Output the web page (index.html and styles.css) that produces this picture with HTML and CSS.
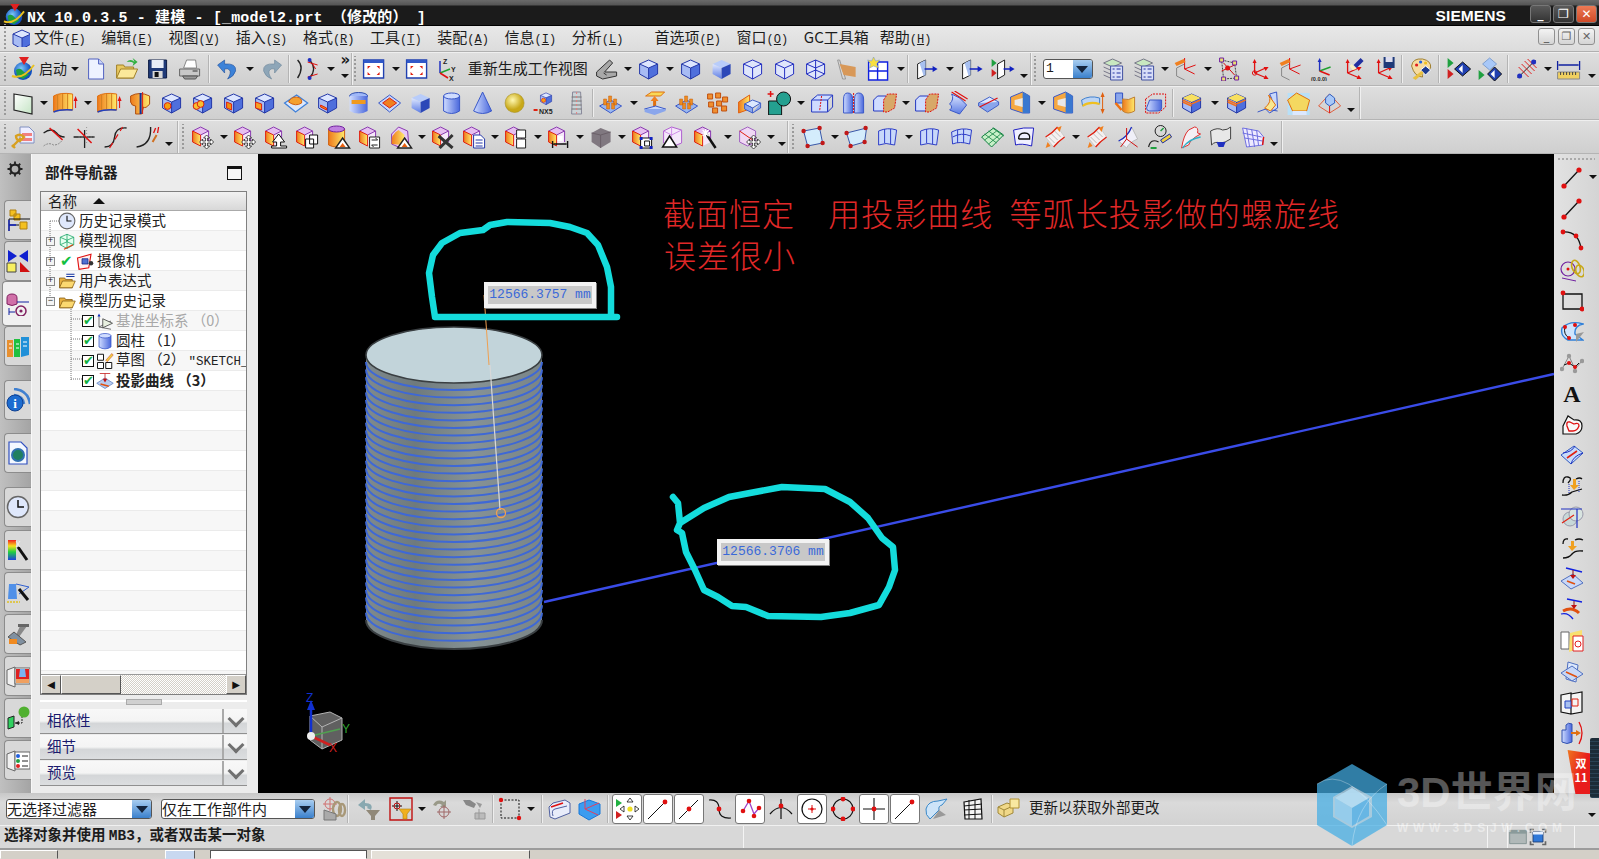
FILE: index.html
```html
<!DOCTYPE html>
<html lang="zh-CN">
<head>
<meta charset="utf-8">
<title>NX 10</title>
<link rel="stylesheet" href="styles.css">
</head>
<body>
<svg class="defs" width="0" height="0" aria-hidden="true">
<defs>
<linearGradient id="gO" x1="0" y1="0" x2="1" y2="0"><stop offset="0" stop-color="#ee7a1c"/><stop offset="1" stop-color="#ffe96a"/></linearGradient>
<linearGradient id="gB" x1="0" y1="0" x2="1" y2="0"><stop offset="0" stop-color="#cfdcff"/><stop offset="1" stop-color="#4a68dc"/></linearGradient>
<linearGradient id="gV" x1="0" y1="0" x2="0" y2="1"><stop offset="0" stop-color="#dfe8ff"/><stop offset="1" stop-color="#5c7ce4"/></linearGradient>
<linearGradient id="gP" x1="0" y1="0" x2="1" y2="1"><stop offset="0" stop-color="#fff"/><stop offset="1" stop-color="#c4e4c4"/></linearGradient>
<linearGradient id="gCyl" x1="0" y1="0" x2="1" y2="0"><stop offset="0" stop-color="#7f8a8d"/><stop offset=".28" stop-color="#6f7a7c"/><stop offset=".6" stop-color="#869295"/><stop offset="1" stop-color="#7a8587"/></linearGradient>
<linearGradient id="gRain" x1="0" y1="0" x2="0" y2="1"><stop offset="0" stop-color="#f02020"/><stop offset=".3" stop-color="#f8e020"/><stop offset=".6" stop-color="#20d040"/><stop offset="1" stop-color="#2040e0"/></linearGradient>
<radialGradient id="gSph" cx=".4" cy=".35"><stop offset="0" stop-color="#fff8b0"/><stop offset="1" stop-color="#c8a818"/></radialGradient>
<radialGradient id="gGlobe" cx=".4" cy=".35"><stop offset="0" stop-color="#7ec8f8"/><stop offset="1" stop-color="#1050c0"/></radialGradient>
<g id="cb"><path d="M3 7 12 3 21 7 12 11Z" fill="#dde6ff"/><path d="M3 7 12 11V22L3 17Z" fill="#a8bcf4"/><path d="M21 7 12 11V22L21 17Z" fill="#4f6fdc"/><path d="M3 7 12 3 21 7V17L12 22 3 17ZM12 11 3 7M12 11 21 7M12 11V22" fill="none" stroke="#2438a8"/></g>
<g id="cw"><path d="M3 7 12 3 21 7V17L12 22 3 17Z" fill="#dfe6fb"/><path d="M3 7 12 3 21 7V17L12 22 3 17ZM12 11 3 7M12 11 21 7M12 11V22" fill="none" stroke="#2430c0"/></g>
<g id="pc"><path d="M2 6 10 2 18 6 10 10Z" fill="#e6bff0"/><path d="M2 6 10 10V21L2 17Z" fill="url(#gO)"/><path d="M18 6 10 10V21L18 17Z" fill="#f6e8fa"/><path d="M2 6 10 2 18 6V17M18 6 10 10" fill="none" stroke="#8a3ab0"/><path d="M2 6 10 10V21L2 17Z" fill="none" stroke="#e02010"/></g>
<g id="mv"><path d="M16 10l3 3h-2v3h3v-2l3 3-3 3v-2h-3v3h2l-3 3-3-3h2v-3h-3v2l-3-3 3-3v2h3v-3h-2z" fill="#fff" stroke="#222" stroke-width=".8"/></g>
<g id="tri"><path d="M16 13 23 23H9Z" fill="#fff" stroke="#222" stroke-width="1.4"/><path d="M16 18 19 22H13Z" fill="#e86010"/></g>
<g id="sh"><path d="M3 6Q12 2 21 5L19 20Q10 17 3 20Z" fill="#c8d8fa" stroke="#3040c8"/><path d="M9 4V18M15 4V19" stroke="#3040c8" fill="none"/></g>
<g id="xyz"><path d="M7 16V4" stroke="#e01010" stroke-width="1.3"/><path d="M7 16 18 11" stroke="#e01010" stroke-width="1.3"/><path d="M7 16 19 21" stroke="#e01010" stroke-width="1.3"/><path d="M7 2 5 6H9ZM21 10 16 10 18 14ZM21 22 16 22 18 18Z" fill="#e01010"/></g>
</defs>
<symbol id="nx" viewBox="0 0 24 24"><circle cx="12" cy="14" r="9" fill="url(#gGlobe)"/><path d="M5 13Q9 10 12 14T19 17L12 22 6 19Z" fill="#20a040"/><path d="M1 19Q12 23 23 8" fill="none" stroke="#e8c020" stroke-width="2"/><path d="M8 0H18L13 8Z" fill="#e02020"/></symbol>
<symbol id="doc" viewBox="0 0 24 24"><path d="M5 2H15L20 7V22H5Z" fill="#eef2ff" stroke="#5060c0"/><path d="M15 2V7H20" fill="#c8d4fa" stroke="#5060c0"/></symbol>
<symbol id="fold" viewBox="0 0 24 24"><path d="M2 21 2 8 9 8 10 10H19V21Z" fill="#e8c860" stroke="#a08028"/><path d="M2 21 6 12H23L19 21Z" fill="#fbe89a" stroke="#a08028"/><path d="M12 5Q16 1 20 5L18 1 23 5 18 9 19 6Q16 4 12 5Z" fill="#30b040"/></symbol>
<symbol id="fld2" viewBox="0 0 24 24"><path d="M2 21 2 8 9 8 10 10H19V21Z" fill="#e8b040" stroke="#805810"/><path d="M2 21 6 12H23L19 21Z" fill="#fbd870" stroke="#805810"/></symbol>
<symbol id="fldq" viewBox="0 0 24 24"><path d="M2 21 2 8 9 8 10 10H19V21Z" fill="#e8b040" stroke="#805810"/><path d="M2 21 6 12H23L19 21Z" fill="#fbd870" stroke="#805810"/><path d="M11 3H22M11 6H22" stroke="#1030a0" stroke-width="1.4"/></symbol>
<symbol id="tw" viewBox="0 0 24 24"><path d="M3 7 12 3 21 7V17L12 22 3 17ZM12 11 3 7M12 11 21 7M12 11V22M3 17 12 13 21 17M12 3V13" fill="#e8fff0" stroke="#10a060"/><path d="M8 23 20 17" stroke="#e04010" stroke-width="1.6"/></symbol>
<symbol id="tc" viewBox="0 0 24 24"><path d="M2 8 20 3 17 21 4 23Z" fill="#fff0f0" stroke="#e01010" stroke-width="1.5"/><path d="M8 9H16V16H8Z" fill="#5070d0" stroke="#102080"/><circle cx="20" cy="15" r="3" fill="#333"/></symbol>
<symbol id="ts" viewBox="0 0 24 24"><path d="M2 3H10V11H2ZM2 14H10V22H2ZM13 14H21V22H13Z" fill="#fff" stroke="#111" stroke-width="1.3"/><path d="M13 11 21 2 23 4 15 13Z" fill="#f0d040" stroke="#c02020" stroke-width=".6"/></symbol>
<symbol id="tx" viewBox="0 0 24 24"><path d="M4 20V4M4 20 20 12M4 20 20 23" stroke="#444" fill="none"/><path d="M9 9 22 15 9 21Z" fill="#e8f0e0" stroke="#333"/><path d="M4 2 2 6H6Z" fill="#1030c0"/></symbol>
<symbol id="tp" viewBox="0 0 24 24"><path d="M1 15 12 8 23 15 12 22Z" fill="#b8ccf0" stroke="#6080c0"/><path d="M6 16 17 19" stroke="#e05010" stroke-width="2"/><path d="M5 2H19M12 2V12" stroke="#c01010"/><path d="M12 14 9 9H15Z" fill="#c01010"/></symbol>
<symbol id="save" viewBox="0 0 24 24"><path d="M3 3H21V21H3Z" fill="#1f3a78" stroke="#0d1c44"/><path d="M6 3H18V11H6Z" fill="#e8eef8"/><path d="M7 14H17V21H7Z" fill="#d8d8d8"/><path d="M9 15H13V20H9Z" fill="#111"/></symbol>
<symbol id="print" viewBox="0 0 24 24"><path d="M6 11 9 3H18L19 11Z" fill="#fff" stroke="#888"/><path d="M2 12H22V19H2Z" fill="#c8c8c8" stroke="#666"/><path d="M5 19H20L18 22H7Z" fill="#999" stroke="#555"/><path d="M15 14H20" stroke="#333"/></symbol>
<symbol id="undo" viewBox="0 0 24 24"><path d="M2 8 9 3V7Q21 6 20 14 18 20 12 22 16 16 14 13 12 11 9 12V16Z" fill="#3c82d8" stroke="#1c4c98" stroke-width=".6"/></symbol>
<symbol id="redo" viewBox="0 0 24 24"><path d="M22 8 15 3V7Q3 6 4 14 6 20 12 22 8 16 10 13 12 11 15 12V16Z" fill="#8ea6b8" stroke="#6c8498" stroke-width=".6"/></symbol>
<symbol id="arcx" viewBox="0 0 24 24"><path d="M2 3Q9 10 2 21" fill="none" stroke="#222" stroke-width="1.4"/><path d="M14 3Q22 12 14 21" fill="none" stroke="#222" stroke-width="1.2"/><path d="M12 5 22 8M22 17 12 20M17 7 20 12" stroke="#e01010"/><circle cx="14" cy="3" r="2" fill="#2030c0"/><circle cx="14" cy="21" r="2" fill="#2030c0"/></symbol>
<symbol id="fit" viewBox="0 0 24 24"><path d="M2 3H22V21H2Z" fill="#fff" stroke="#2040b0" stroke-width="1.4"/><path d="M2 3H22V6H2Z" fill="#3058c8"/><path d="M6 9H9L6 12ZM18 9H15L18 12ZM6 18H9L6 15ZM18 18H15L18 15Z" fill="#e02010"/></symbol>
<symbol id="wcs" viewBox="0 0 24 24"><path d="M7 16V4" stroke="#2030c0" stroke-width="1.5"/><path d="M7 16 17 12" stroke="#20a030" stroke-width="1.5"/><path d="M7 16 15 21" stroke="#e01010" stroke-width="1.5"/></symbol>
<symbol id="prism" viewBox="0 0 24 24"><path d="M2 15 15 3 18 6 10 15 22 15V19L8 22 2 19Z" fill="#a8a8a8" stroke="#333"/><path d="M9 16 12 18" stroke="#333"/></symbol>
<symbol id="cbU" viewBox="0 0 24 24"><use href="#cb"/></symbol>
<symbol id="cg" viewBox="0 0 24 24"><path d="M3 7 12 3 21 7 12 11Z" fill="#b8ccfa"/><path d="M3 7 12 11V22L3 17Z" fill="url(#gV)"/><path d="M21 7 12 11V22L21 17Z" fill="#2c48b8"/></symbol>
<symbol id="cw1" viewBox="0 0 24 24"><use href="#cw"/></symbol>
<symbol id="cw2" viewBox="0 0 24 24"><use href="#cw"/><path d="M3 17 12 13 21 17M12 3V13" stroke="#2430c0" fill="none"/></symbol>
<symbol id="paper" viewBox="0 0 24 24"><path d="M3 3 8 22H11L5 3Z" fill="#d8d8d8" stroke="#999"/><path d="M5 7 21 10V20L9 18Z" fill="#d89858"/></symbol>
<symbol id="grid" viewBox="0 0 24 24"><path d="M3 5H22V23H3ZM3 14H22M12 5V23" fill="#fff" stroke="#1020e0" stroke-width="1.4"/><path d="M8 0 10 4 14 3 11 7 13 11 8 9 4 11 5 7 2 3 6 4Z" fill="#f8e040" stroke="#7090c0" stroke-width=".5"/></symbol>
<symbol id="pla" viewBox="0 0 24 24"><path d="M3 7 11 3V18L3 22Z" fill="#fff" stroke="#222"/><path d="M5 6 11 3V18L9 19Z" fill="#a8c0f0"/><path d="M10 12H19" stroke="#1020c0" stroke-width="1.4"/><path d="M23 12 18 9V15Z" fill="#1020c0"/></symbol>
<symbol id="plb" viewBox="0 0 24 24"><path d="M1 2 6 6 1 10Z" fill="#20a040"/><path d="M1 12 6 16 1 20Z" fill="#d02020"/><path d="M7 7 14 3V18L7 22Z" fill="#fff" stroke="#222"/><path d="M13 12H20" stroke="#1020c0" stroke-width="1.4"/><path d="M24 12 19 9V15Z" fill="#1020c0"/></symbol>
<symbol id="stack" viewBox="0 0 24 24"><path d="M3 6 12 2 21 6 12 10Z" fill="#c8e8c0" stroke="#778"/><path d="M3 10 12 14 21 10M3 14 12 18 21 14M3 18 12 22" fill="none" stroke="#778"/><path d="M10 9H22V23H10Z" fill="#d8def8" stroke="#4050a0"/><path d="M12 12H14M16 12H20M12 16H14M16 16H20M12 20H14M16 20H20" stroke="#2030a0"/></symbol>
<symbol id="csO" viewBox="0 0 24 24"><path d="M3 19V11L11 7M3 19 11 23" stroke="#888" fill="none"/><path d="M11 14V3M11 14 22 10M11 14 21 19" stroke="#e01010" fill="none" transform="translate(0 -2)"/><path d="M1 6 10 2 12 5 3 9Z" fill="#f08020"/></symbol>
<symbol id="node" viewBox="0 0 24 24"><path d="M5 3 18 6 20 21 7 22Z" fill="none" stroke="#444" stroke-dasharray="2 1"/><path d="M7 6 18 18M5 14 18 8" stroke="#d01010"/><path d="M3 1H7V5H3ZM16 4H20V8H16ZM18 19H22V23H18ZM5 20H9V24H5Z" fill="#e8e070" stroke="#7020a0"/><circle cx="11" cy="11" r="2.5" fill="#e01010"/></symbol>
<symbol id="ax0" viewBox="0 0 24 24"><use href="#xyz"/><circle cx="7" cy="16" r="2.2" fill="none" stroke="#e01010"/></symbol>
<symbol id="ax" viewBox="0 0 24 24"><path d="M10 14V3" stroke="#2030c0" stroke-width="1.4"/><path d="M10 1 8 5H12Z" fill="#2030c0"/><path d="M10 14 21 10" stroke="#20a030" stroke-width="1.4"/><path d="M10 14 20 18" stroke="#e01010" stroke-width="1.4"/></symbol>
<symbol id="axL" viewBox="0 0 24 24"><use href="#xyz"/><path d="M13 8 20 1 23 4 16 11Z" fill="#2030a0"/><path d="M11 7 16 12 12 13 9 9Z" fill="#f8f0c0"/></symbol>
<symbol id="axS" viewBox="0 0 24 24"><use href="#xyz"/><path d="M12 0H23V11H12Z" fill="#1f3a78"/><path d="M14 0H21V5H14Z" fill="#dde"/></symbol>
<symbol id="pal" viewBox="0 0 24 24"><path d="M2 9Q3 1 13 2 22 4 21 11 18 15 14 12 11 16 13 20 5 20 2 9Z" fill="#f6dca0" stroke="#a08030"/><circle cx="7" cy="8" r="1.6" fill="#e02020"/><circle cx="11" cy="5" r="1.6" fill="#2060e0"/><circle cx="16" cy="6" r="1.6" fill="#f0c020"/><path d="M16 9 21 13 16 18 11 13Z" fill="#1c3a90" stroke="#fff"/><path d="M3 21 12 14 14 16 6 23Z" fill="#e8c040"/></symbol>
<symbol id="dg" viewBox="0 0 24 24"><path d="M1 1 7 6 1 11Z" fill="#20a040"/><path d="M1 12 7 17 1 22Z" fill="#d02020"/><path d="M16 5 24 12 16 19 8 12Z" fill="#2040b0" stroke="#111"/><path d="M16 8V16L12 12Z" fill="#fff"/></symbol>
<symbol id="dh" viewBox="0 0 24 24"><path d="M12 1 19 7 12 13 5 7Z" fill="#a8c8f8" stroke="#80a0d0"/><path d="M1 13 7 18 1 23Z" fill="#20a040"/><path d="M17 10 24 17 17 24 10 17Z" fill="#2040b0" stroke="#111"/><path d="M17 13V21L13 17Z" fill="#fff"/></symbol>
<symbol id="meas" viewBox="0 0 24 24"><path d="M3 21 21 3" stroke="#222"/><path d="M4 10 14 20M7 7 17 17M10 4 20 14M13 2 22 11" stroke="#e02020"/><circle cx="5" cy="19" r="2.5" fill="#2030c0"/><circle cx="19" cy="5" r="2.5" fill="#2030c0"/></symbol>
<symbol id="rule" viewBox="0 0 24 24"><path d="M1 4V13M23 4V13M2 8H22" stroke="#1020a0" stroke-width="1.3"/><path d="M1 15H23V22H1Z" fill="#f0d060" stroke="#888"/><path d="M4 15V18M7 15V18M10 15V18M13 15V18M16 15V18M19 15V18" stroke="#444"/></symbol>
<symbol id="pln" viewBox="0 0 24 24"><path d="M3 3 21 6V23L3 19Z" fill="url(#gP)" stroke="#222" stroke-width="1.2"/></symbol>
<symbol id="ext" viewBox="0 0 24 24"><path d="M1 5Q8 1 20 3V19Q8 18 1 21Z" fill="url(#gO)" stroke="#e07010"/><path d="M5 4V19M10 3V18M15 3V18" stroke="#d08020"/><path d="M1 21Q8 18 20 19" stroke="#2040c0" stroke-width="1.6" fill="none"/><path d="M23 17V9" stroke="#e01010"/><path d="M23 5 21 10H25Z" fill="#e01010"/></symbol>
<symbol id="rev" viewBox="0 0 24 24"><path d="M3 5Q12 0 22 5V13Q18 18 16 16L14 23H8L8 15Q4 15 3 11Z" fill="url(#gO)" stroke="#b05010"/><path d="M13 2V23" stroke="#1030a0" stroke-width="2"/><path d="M15 1V23" stroke="#e02010"/></symbol>
<symbol id="ch" viewBox="0 0 24 24"><use href="#cb"/><circle cx="8" cy="15" r="3.4" fill="#f4a010" stroke="#e02010"/></symbol>
<symbol id="ch2" viewBox="0 0 24 24"><use href="#cb"/><circle cx="6" cy="15" r="3.4" fill="#f8c030" stroke="#e02010"/><circle cx="10" cy="13" r="3.4" fill="#f8c030" stroke="#e02010"/></symbol>
<symbol id="cr" viewBox="0 0 24 24"><use href="#cb"/><path d="M5 11 10 13V19L5 17Z" fill="#f09010" stroke="#e02010"/></symbol>
<symbol id="cq" viewBox="0 0 24 24"><use href="#cb"/><path d="M3 11 9 13V19L3 17Z" fill="#f8a020" stroke="#e02010"/></symbol>
<symbol id="plate" viewBox="0 0 24 24"><path d="M1 12 13 4 24 12 12 21Z" fill="#dce8fc" stroke="#4080d8" stroke-width="1.3"/><path d="M5 11Q7 6 13 6 19 7 18 12 12 16 5 11Z" fill="#f4a030" stroke="#d06010"/></symbol>
<symbol id="slot" viewBox="0 0 24 24"><use href="#cb"/><path d="M5 14 11 17V19L5 16Z" fill="#f09010" stroke="#e02010"/></symbol>
<symbol id="groove" viewBox="0 0 24 24"><ellipse cx="12" cy="5" rx="9" ry="3.5" fill="#a0b8f8" stroke="#3050b0"/><path d="M3 5V20Q12 25 21 20V5" fill="url(#gB)"/><path d="M5 9H19V13H5Z" fill="#f09a20"/></symbol>
<symbol id="tray" viewBox="0 0 24 24"><path d="M1 12 12 4 23 12 12 21Z" fill="#c8d8fc" stroke="#3a58c8"/><path d="M5 12 12 7 19 12 12 17Z" fill="#f08020" stroke="#e02010"/></symbol>
<symbol id="cyl" viewBox="0 0 24 24"><path d="M4 5V20Q12 25 20 20V5Z" fill="url(#gB)"/><ellipse cx="12" cy="5" rx="8" ry="3" fill="#cfdcff" stroke="#3a58c8"/><path d="M4 5V20Q12 25 20 20V5" fill="none" stroke="#3a58c8"/></symbol>
<symbol id="cone" viewBox="0 0 24 24"><path d="M12 1 3 20Q12 25 21 20Z" fill="url(#gB)" stroke="#3a58c8"/></symbol>
<symbol id="sph" viewBox="0 0 24 24"><circle cx="12" cy="12" r="9.5" fill="url(#gSph)" stroke="#a89020" stroke-width=".6"/></symbol>
<symbol id="nx5" viewBox="0 0 24 24"><g transform="translate(5 0) scale(.62)"><use href="#cb"/><circle cx="8" cy="15" r="3.4" fill="#f4a010" stroke="#e02010"/></g><path d="M0 19H4" stroke="#e02010" stroke-width="2"/></symbol>
<symbol id="spring" viewBox="0 0 24 24"><path d="M8 1H16L17 23H7Z" fill="#ccd4d8" stroke="#889"/><path d="M7 6H17M7 10H17M7 14H17M7 18H17" stroke="#777"/><path d="M12 1V23" stroke="#e08080" stroke-dasharray="2 2"/></symbol>
<symbol id="peg" viewBox="0 0 24 24"><path d="M1 15 12 9 23 15 12 22Z" fill="#9ab8f0" stroke="#3a58c8"/><path d="M5 8H8V14H5ZM10 5H13V11H10ZM15 8H18V14H15ZM8 12H11V18H8ZM13 12H16V18H13Z" fill="#f08c20" stroke="#c06010" stroke-width=".5"/></symbol>
<symbol id="rib" viewBox="0 0 24 24"><path d="M3 5 9 1H22L18 5Z" fill="#f8d858" stroke="#e07010"/><path d="M12 17V9" stroke="#e07010" stroke-width="3"/><path d="M12 5 8 10H16Z" fill="#f08020"/><path d="M2 18 13 15 23 18 12 22Z" fill="#c8d8fc" stroke="#3a58c8"/><path d="M2 18V21L12 24 23 20V18" fill="#8aa6ec"/></symbol>
<symbol id="pegs" viewBox="0 0 24 24"><g fill="#f09030" stroke="#c05010"><path d="M2 3H7V8H2ZM10 2H15V7H10ZM17 6H22V11H17ZM3 11H8V16H3ZM11 10H16V15H11ZM16 15H21V20H16ZM7 17H12V22H7Z"/></g></symbol>
<symbol id="split" viewBox="0 0 24 24"><path d="M2 11 13 4V18L2 22Z" fill="url(#gO)" stroke="#e06010"/><path d="M8 13 16 9 24 12 16 17Z" fill="#dce8ff" stroke="#4060c8"/><path d="M8 13V18L16 22V17ZM24 12V17L16 22" fill="#8aa6ec" stroke="#4060c8"/></symbol>
<symbol id="teal" viewBox="0 0 24 24"><path d="M1 10H14V24H1Z" fill="#24a090" stroke="#111"/><circle cx="16" cy="8" r="7" fill="#24a090" stroke="#111"/><path d="M3 0V6M0 3H6" stroke="#e01010" stroke-width="1.5"/></symbol>
<symbol id="cut" viewBox="0 0 24 24"><path d="M2 9 8 4H23L18 9V21H2Z" fill="#cfdcff" stroke="#2438c0"/><path d="M18 9V21L23 16V4M2 9H18" fill="none" stroke="#2438c0"/><path d="M12 5 10 20" stroke="#e01010" stroke-dasharray="2 1"/></symbol>
<symbol id="twin" viewBox="0 0 24 24"><path d="M2 22V8Q2 2 6 2 11 2 11 8V22Z" fill="url(#gB)" stroke="#3a58c8"/><path d="M13 22V8Q13 2 17 2 22 2 22 8V22Z" fill="url(#gB)" stroke="#3a58c8"/><path d="M12 2V23" stroke="#e01010" stroke-dasharray="2 1"/></symbol>
<symbol id="scb" viewBox="0 0 24 24"><path d="M1 9 5 5H14V20H1Z" fill="#cfdcff" stroke="#2438c0"/><path d="M11 9 15 3H24L22 17 15 21H11Z" fill="#d8a868" stroke="#e01010" stroke-dasharray="2 1"/></symbol>
<symbol id="blade" viewBox="0 0 24 24"><path d="M4 13Q9 8 6 3L14 7 21 14 14 23 4 19Q8 16 4 13Z" fill="url(#gV)" stroke="#3a58c8"/><path d="M6 1 20 10M9 0 22 8" stroke="#e01010" stroke-width="1.2"/></symbol>
<symbol id="slice" viewBox="0 0 24 24"><path d="M2 12 13 6 22 11 11 17Z" fill="#dce8ff" stroke="#4060c8"/><path d="M2 12V15L11 21 22 14V11" fill="#8aa6ec" stroke="#4060c8"/><path d="M3 16 21 7" stroke="#e01010" stroke-width="1.3"/></symbol>
<symbol id="frame" viewBox="0 0 24 24"><path d="M3 6 15 1 22 5V22H15L3 18Z" fill="#f6a840" stroke="#3a58c8"/><path d="M15 1V22H22V5Z" fill="#3a78d0"/><path d="M7 9 15 7V16L7 14Z" fill="#e8e8e8"/></symbol>
<symbol id="band2" viewBox="0 0 24 24"><path d="M0 9Q8 4 18 7V13Q8 10 1 15Z" fill="#bcd4f4" stroke="#4080d0"/><path d="M1 15Q8 10 18 13" stroke="#f0c020" stroke-width="2" fill="none"/><path d="M21 3V21" stroke="#e06010"/><path d="M21 1 19 6H23ZM21 23 19 18H23Z" fill="#e06010"/></symbol>
<symbol id="bend" viewBox="0 0 24 24"><path d="M3 2H10V12H3Z" fill="#8aa6ec" stroke="#3050c0"/><path d="M10 8Q16 10 22 6V20Q15 24 10 20Z" fill="url(#gO)" stroke="#c08030"/><path d="M3 12 9 19" stroke="#f07010" stroke-width="2.5"/></symbol>
<symbol id="cdot" viewBox="0 0 24 24"><path d="M2 8 9 3H22V16L15 22H2Z" fill="none" stroke="#e01010" stroke-dasharray="2 1"/><path d="M6 9H18V17Q18 20 14 20H6Q3 20 3 17Z" fill="url(#gB)" stroke="#3a58c8"/></symbol>
<symbol id="rnd" viewBox="0 0 24 24"><use href="#cb"/><path d="M3 7 12 3 21 7 12 11Z" fill="#f8e060"/><path d="M3 9 12 13 21 9M3 11 12 15" stroke="#f07020" fill="none" stroke-width="1.4"/></symbol>
<symbol id="fil" viewBox="0 0 24 24"><path d="M21 1 22 17 14 22 10 18Q20 12 14 3Z" fill="#c8d8fc" stroke="#3a58c8"/><path d="M2 21 10 18 22 20" fill="none" stroke="#3a58c8"/><path d="M9 17Q17 11 13 4L20 14 15 20Z" fill="#f8e890" stroke="#e07010"/></symbol>
<symbol id="chm" viewBox="0 0 24 24"><path d="M1 2H23V24H1Z" fill="#b8e0f8"/><path d="M1 9 10 2 23 9 20 20H6Z" fill="#f4d860" stroke="#e07010"/><path d="M6 20H20V24H6Z" fill="#dce8ff"/></symbol>
<symbol id="pyr" viewBox="0 0 24 24"><path d="M12 3 23 15 12 22 1 15Z" fill="none" stroke="#e06040"/><path d="M8 7 12 3 17 7V12L12 15 8 12Z" fill="#a8c8f8" stroke="#3060c0"/><path d="M12 15V22" stroke="#e01010"/></symbol>
<symbol id="wr" viewBox="0 0 24 24"><path d="M9 2H18L23 7V18H9Z" fill="#eef" stroke="#8090c0"/><path d="M11 8H21V11H11ZM11 13H21V16H11Z" fill="#f08080"/><path d="M1 22 10 13M5 11Q9 8 13 12L9 16Q5 15 5 11ZM1 20 4 23" stroke="#d8a020" stroke-width="2.4" fill="none"/></symbol>
<symbol id="trm" viewBox="0 0 24 24"><path d="M2 8Q10 2 15 8 18 12 23 12" fill="none" stroke="#222" stroke-width="1.3"/><path d="M2 21Q7 17 12 20 17 20 20 16" fill="none" stroke="#888" stroke-dasharray="2 1"/><path d="M8 3 21 15" stroke="#e01010" stroke-width="1.5"/></symbol>
<symbol id="crs" viewBox="0 0 24 24"><path d="M1 12H22M12 5V23" stroke="#222" stroke-width="1.3"/><path d="M14 2V20M6 12H23" stroke="#999" stroke-dasharray="1 2"/><path d="M5 4 19 18" stroke="#e01010" stroke-width="1.5"/></symbol>
<symbol id="cfx" viewBox="0 0 24 24"><path d="M1 22Q10 22 11 12T23 3" fill="none" stroke="#222" stroke-width="1.4"/><path d="M6 23 19 2" stroke="#e01010" stroke-width="1.2" stroke-dasharray="6 4"/></symbol>
<symbol id="cf2" viewBox="0 0 24 24"><path d="M1 22Q16 20 15 2" fill="none" stroke="#222" stroke-width="1.4"/><path d="M18 8 20 3M22 8 23 2" stroke="#e01010" stroke-width="1.3"/><path d="M17 17 21 10" stroke="#d07020" stroke-width="2"/></symbol>
<symbol id="pmv" viewBox="0 0 24 24"><use href="#pc"/><use href="#mv"/></symbol>
<symbol id="pup" viewBox="0 0 24 24"><use href="#pc"/><path d="M15 9 21 17H17V21H23V23H8V21H13V17H9Z" fill="#fff" stroke="#111"/></symbol>
<symbol id="pcp" viewBox="0 0 24 24"><use href="#pc"/><path d="M11 14H19V23H11ZM15 10H23V19H15Z" fill="#fff" stroke="#111"/></symbol>
<symbol id="cyt" viewBox="0 0 24 24"><path d="M2 4V20Q10 24 18 20V4Z" fill="url(#gO)" stroke="#d06010"/><ellipse cx="10" cy="4" rx="8" ry="3" fill="#c080e0" stroke="#7020a0"/><use href="#tri"/></symbol>
<symbol id="psw" viewBox="0 0 24 24"><use href="#pc"/><path d="M12 12H22V23H12Z" fill="#fff" stroke="#222"/><path d="M14 15H20M20 15 18 13M20 20H14M14 20 16 22" stroke="#222" fill="none"/></symbol>
<symbol id="ptr" viewBox="0 0 24 24"><path d="M3 9 10 2 19 6 20 18 10 22 3 19Z" fill="#e8c8f8" stroke="#8a3ab0"/><path d="M3 19Q2 9 10 5L16 10 14 20Z" fill="url(#gO)"/><use href="#tri"/></symbol>
<symbol id="px" viewBox="0 0 24 24"><use href="#pc"/><path d="M8 11 22 23M22 10 9 23" stroke="#333" stroke-width="3"/></symbol>
<symbol id="pd" viewBox="0 0 24 24"><use href="#pc"/><path d="M12 10H19L23 14V23H12Z" fill="#fff" stroke="#2438a8"/><path d="M14 15H21M14 18H21M14 21H21" stroke="#2438a8"/></symbol>
<symbol id="psp" viewBox="0 0 24 24"><use href="#pc"/><path d="M13 5H22V13H13ZM13 14H22V23H13Z" fill="#fff" stroke="#222"/></symbol>
<symbol id="pdm" viewBox="0 0 24 24"><use href="#pc"/><path d="M6 16V23M21 16V23M7 19H20" stroke="#111" stroke-width="1.4"/><path d="M11 11H16V16H11Z" fill="#fff"/></symbol>
<symbol id="gho" viewBox="0 0 24 24"><path d="M3 8 12 3 22 7V17L12 23 3 17Z" fill="#807880"/><path d="M12 10V23M3 8 12 10 22 7" stroke="#6a6068" fill="none"/></symbol>
<symbol id="pbx" viewBox="0 0 24 24"><use href="#pc"/><path d="M10 13H21V23H10Z" fill="#fff" stroke="#111"/><path d="M14 16H19V21H14Z" fill="none" stroke="#111"/><path d="M9 12H12V15H9ZM19 12H22V15H19ZM9 21H12V24H9ZM19 21H22V24H19Z" fill="#1020c0"/></symbol>
<symbol id="ptg" viewBox="0 0 24 24"><path d="M2 6 10 2 20 5 20 18 10 22 2 18Z" fill="#f4e8fa" stroke="#b060d0"/><path d="M10 2V22M2 6 10 10 20 5" stroke="#d090e8" fill="none"/><path d="M8 11 15 22H1Z" fill="#fff" stroke="#111" stroke-width="1.5"/></symbol>
<symbol id="pwd" viewBox="0 0 24 24"><use href="#pc"/><path d="M13 8 23 23" stroke="#111" stroke-width="2.5"/><path d="M13 4V12M9 8H17M10 5 16 11M16 5 10 11" stroke="#fff" stroke-width="1.2"/></symbol>
<symbol id="pmw" viewBox="0 0 24 24"><path d="M2 6 10 2 18 6V17L10 21 2 17Z" fill="#f0d8f4" stroke="#a060c0"/><path d="M2 6 18 17" stroke="#e02010"/><use href="#mv"/></symbol>
<symbol id="pat" viewBox="0 0 24 24"><path d="M3 6 19 3 22 18 7 21Z" fill="#d4ecfc" stroke="#3a58a8"/><g fill="#c01818"><circle cx="3" cy="6" r="2.2"/><circle cx="19" cy="3" r="2.2"/><circle cx="22" cy="18" r="2.2"/><circle cx="7" cy="21" r="2.2"/></g></symbol>
<symbol id="pt2" viewBox="0 0 24 24"><path d="M2 8 22 3 20 17 6 21Z" fill="#d4ecfc" stroke="#3a58a8"/><g fill="#c01818"><circle cx="2" cy="8" r="2.2"/><circle cx="21" cy="3" r="2.2"/><circle cx="20" cy="17" r="2.2"/><circle cx="6" cy="21" r="2.2"/></g></symbol>
<symbol id="shU" viewBox="0 0 24 24"><use href="#sh"/></symbol>
<symbol id="shg" viewBox="0 0 24 24"><path d="M2 7Q12 2 22 5L20 19Q10 16 3 19Z" fill="#c8d8fa" stroke="#3040c8"/><path d="M3 12Q12 7 21 11M8 5V18M14 4V18" stroke="#3040c8" fill="none"/></symbol>
<symbol id="shn" viewBox="0 0 24 24"><path d="M1 12 13 3 23 10 11 22Z" fill="#c8f0c8" stroke="#108040"/><path d="M4 9 16 18M8 6 19 14M12 3 23 11M4 15 16 6M8 19 20 9" stroke="#108040" stroke-width=".8"/></symbol>
<symbol id="shc" viewBox="0 0 24 24"><path d="M2 5Q12 2 22 3L20 21Q10 18 4 20Z" fill="#f0f0ff" stroke="#2020c0"/><path d="M7 14Q7 8 13 8T18 14H7" fill="none" stroke="#111" stroke-width="1.3"/></symbol>
<symbol id="wrp" viewBox="0 0 24 24"><path d="M3 12Q10 8 15 2L22 12Q15 17 11 22Z" fill="#f4f0f0" stroke="#ccc"/><path d="M3 12Q10 8 15 2M11 22Q15 17 22 12" stroke="#e02010" stroke-width="1.3" fill="none"/><path d="M6 12 12 18M9 9 15 15M12 6 18 12" stroke="#bbb"/><path d="M19 1 14 3 17 7ZM3 23 8 21 5 17Z" fill="#f08020"/></symbol>
<symbol id="wr2" viewBox="0 0 24 24"><path d="M3 16Q12 12 16 2L22 14Q14 17 11 23Z" fill="#f0f0f8" stroke="#bbb"/><path d="M3 16Q12 12 16 2" stroke="#2030c0" stroke-width="1.3" fill="none"/><path d="M11 14V3M11 14 22 22M11 14 5 22" stroke="#d01010"/></symbol>
<symbol id="cpn" viewBox="0 0 24 24"><circle cx="13" cy="6" r="5.5" fill="none" stroke="#222"/><path d="M13 6 16 3" stroke="#20a040" stroke-width="1.5"/><path d="M1 22Q3 13 11 17" fill="none" stroke="#222" stroke-width="1.2"/><path d="M3 22H9V24H3Z" fill="#20a040"/><path d="M13 15 22 9 24 12 15 18Z" fill="#f0d040" stroke="#2030a0"/></symbol>
<symbol id="swp" viewBox="0 0 24 24"><path d="M3 23Q5 10 10 5L16 2Q20 2 19 8L22 9Q12 14 10 20Z" fill="#f4f0f4" stroke="#e03030"/><path d="M4 23Q10 14 22 12" stroke="#30b0c8" fill="none" stroke-width="1.4"/></symbol>
<symbol id="drp" viewBox="0 0 24 24"><path d="M1 6Q8 2 13 5 18 5 21 2V14Q15 18 11 18 5 16 2 20Z" fill="#e8e8e8" stroke="#444"/><path d="M7 17H16L14 22H9Z" fill="#2030c0"/></symbol>
<symbol id="brk" viewBox="0 0 24 24"><path d="M2 3 18 6 23 12 22 20 6 22Z" fill="#eeeaff" stroke="#7070e0"/><path d="M2 8 21 12M4 13 22 16M6 3 9 22M11 4 14 22M16 5 18 21" stroke="#7070e0"/><path d="M23 12 22 20" stroke="#e01010" stroke-width="1.5"/></symbol>
<symbol id="lnd" viewBox="0 0 24 24"><path d="M4 21 19 5" stroke="#111" stroke-width="1.2"/><circle cx="4" cy="21" r="2.6" fill="#e01010"/><circle cx="19" cy="5" r="2.6" fill="#e01010"/></symbol>
<symbol id="arcd" viewBox="0 0 24 24"><path d="M3 5Q18 4 21 21" fill="none" stroke="#111" stroke-width="1.3"/><circle cx="3" cy="5" r="2.4" fill="#e01010"/><circle cx="16" cy="9" r="2.4" fill="#e01010"/><circle cx="21" cy="21" r="2.4" fill="#e01010"/></symbol>
<symbol id="chn" viewBox="0 0 24 24"><circle cx="8" cy="11" r="7" fill="none" stroke="#7020a0" stroke-width="1.2"/><circle cx="8" cy="11" r="1.5" fill="#e01010"/><path d="M2 20 16 23" stroke="#7020a0"/><ellipse cx="16" cy="9" rx="4" ry="7" fill="none" stroke="#c8a818" stroke-width="1.6" transform="rotate(-20 16 9)"/><ellipse cx="20" cy="13" rx="4" ry="6" fill="none" stroke="#c8a818" stroke-width="1.6" transform="rotate(-20 20 13)"/></symbol>
<symbol id="rct" viewBox="0 0 24 24"><path d="M3 5H22V20H3Z" fill="none" stroke="#111" stroke-width="1.3"/><circle cx="3" cy="4" r="2.4" fill="#e01010"/><circle cx="22" cy="20" r="2.4" fill="#e01010"/></symbol>
<symbol id="srf" viewBox="0 0 24 24"><path d="M2 8Q10 0 23 4 14 6 15 14L23 20 8 20Q0 16 2 8Z" fill="#cfe4fc" stroke="#3080d8" stroke-width="1.4"/><path d="M16 14 24 12 16 22Z" fill="#999"/><path d="M5 7Q3 14 9 18" stroke="#111" fill="none"/><g fill="#e01010"><circle cx="5" cy="7" r="2"/><circle cx="15" cy="5" r="2"/><circle cx="9" cy="18" r="2"/></g></symbol>
<symbol id="pol" viewBox="0 0 24 24"><path d="M2 18 9 5 15 18 22 10" fill="none" stroke="#888"/><path d="M4 14 9 12 15 16 19 12" fill="none" stroke="#111"/><g fill="#999"><circle cx="9" cy="5" r="2.2"/><circle cx="22" cy="10" r="2.2"/><circle cx="15" cy="20" r="2.2"/><circle cx="2" cy="18" r="2.2"/></g><g fill="#e01010"><circle cx="9" cy="12" r="2"/><circle cx="15" cy="16" r="2"/></g></symbol>
<symbol id="hrt" viewBox="0 0 24 24"><path d="M3 13 8 3 14 7Q22 6 22 13 22 19 16 21H3Z" fill="#f8f8f8" stroke="#111" stroke-width="1.2"/><path d="M7 13Q6 8 10 9L14 11Q19 9 19 13 17 18 13 18H9Z" fill="none" stroke="#e01010" stroke-width="1.3"/></symbol>
<symbol id="r1" viewBox="0 0 24 24"><path d="M1 12 14 3 23 10 11 21Z" fill="#c8dcfa" stroke="#3058c0"/><path d="M3 10Q12 9 15 3M11 21Q13 13 23 10" stroke="#2030c0" fill="none"/><path d="M7 15 17 8" stroke="#e02010" stroke-width="1.6"/></symbol>
<symbol id="r2" viewBox="0 0 24 24"><path d="M3 9Q3 2 8 3T8 9M16 5Q20 3 22 5" fill="none" stroke="#111" stroke-width="1.3"/><path d="M2 21Q8 22 12 18L22 15" fill="none" stroke="#111" stroke-width="1.3"/><path d="M9 10V20M19 7V18" stroke="#2030c0" stroke-dasharray="1 1"/><path d="M13 5H16V11H19L14 16 10 11H13Z" fill="#f0a020"/></symbol>
<symbol id="r3" viewBox="0 0 24 24"><circle cx="10" cy="14" r="7" fill="#c8d8d8" stroke="#99a"/><circle cx="16" cy="9" r="7" fill="#d8e4e0" stroke="#99a"/><path d="M1 4H22M17 4V23" stroke="#2030c0" stroke-width="1.2"/><path d="M2 18 14 10" stroke="#e02010" stroke-width="1.2"/></symbol>
<symbol id="r4" viewBox="0 0 24 24"><path d="M3 8Q3 2 8 3M15 4Q19 2 23 4" fill="none" stroke="#111" stroke-width="1.3"/><path d="M3 22Q9 22 12 18T23 15" fill="none" stroke="#111" stroke-width="1.3"/><path d="M11 5H14V10H17L12 15 8 10H11Z" fill="#f0a020"/></symbol>
<symbol id="r5" viewBox="0 0 24 24"><path d="M6 1 22 5" stroke="#1020e0" stroke-width="1.4"/><path d="M1 14 13 7 23 16 11 22Z" fill="#c8d8f8" stroke="#5070c0"/><path d="M7 14 15 17" stroke="#e05010" stroke-width="1.8"/><path d="M13 3V10" stroke="#901010"/><path d="M13 12 10 8H16Z" fill="#c01010"/></symbol>
<symbol id="r6" viewBox="0 0 24 24"><path d="M7 1 22 4M1 16Q8 14 13 21" stroke="#1020e0" stroke-width="1.3" fill="none"/><path d="M3 13Q12 8 19 15" stroke="#e05010" stroke-width="3" fill="none"/><path d="M14 3V9" stroke="#901010"/><path d="M14 11 11 7H17Z" fill="#c01010"/></symbol>
<symbol id="r7" viewBox="0 0 24 24"><path d="M1 3H9V20H1Z" fill="#fff" stroke="#666"/><path d="M10 4 22 1V18L9 23Z" fill="#f8e070"/><path d="M13 7H23V22H13Z" fill="#fff" stroke="#e02020"/><circle cx="18" cy="15" r="3" fill="none" stroke="#e02020"/></symbol>
<symbol id="r8" viewBox="0 0 24 24"><path d="M8 2 18 5 16 22 6 19Z" fill="#dce8fc" stroke="#5070c0"/><path d="M1 13 12 6 23 14 12 21Z" fill="#c8d8f8" stroke="#5070c0"/><path d="M6 12 17 17" stroke="#e05010" stroke-width="1.6"/></symbol>
<symbol id="r9" viewBox="0 0 24 24"><path d="M1 4 11 2V23L1 21ZM11 3 22 1V21L11 23Z" fill="#f4f4f4" stroke="#111" stroke-width="1.2"/><path d="M5 10H11V17H5Z" fill="#a8c0f0" stroke="#2040c0"/><path d="M12 8H18V15H12Z" fill="none" stroke="#e02010"/></symbol>
<symbol id="r10" viewBox="0 0 24 24"><path d="M2 9V21Q7 24 12 21V3Q8 1 6 4V9Z" fill="url(#gB)" stroke="#3050b0"/><path d="M11 12H17" stroke="#e07010" stroke-width="2"/><path d="M21 12 16 9V15Z" fill="#e07010"/><path d="M19 1Q25 12 19 23" stroke="#e01010" fill="none" stroke-width="1.3"/></symbol>
<symbol id="t1" viewBox="0 0 24 24"><path d="M4 2H10V8H4ZM8 6H14V12H8Z" fill="#f4c020" stroke="#b08010"/><path d="M3 23V11H24M3 17H13" stroke="#111" fill="none"/><path d="M3 12V23M3 17H10" stroke="#1020c0" fill="none" stroke-width="1.3"/><path d="M14 14H21V21H14Z" fill="#f4c020" stroke="#b08010"/></symbol>
<symbol id="t2" viewBox="0 0 24 24"><path d="M2 1 11 7 2 13ZM22 1 13 7 22 13Z" fill="#1020d0"/><path d="M1 14H10V23H1Z" fill="#f8f060" stroke="#444"/><path d="M14 23V13L24 23Z" fill="#d01010"/></symbol>
<symbol id="t3" viewBox="0 0 24 24"><path d="M2 6Q2 2 7 2T12 6V12Q7 15 2 12Z" fill="#d070a8" stroke="#802060"/><path d="M4 23V16M4 20H10M12 10H24" stroke="#1020a0" fill="none"/><circle cx="16" cy="19" r="5" fill="none" stroke="#802060" stroke-width="1.5"/><circle cx="16" cy="19" r="1.6" fill="#802060"/></symbol>
<symbol id="t4" viewBox="0 0 24 24"><path d="M1 6H7V23H1Z" fill="#e89030"/><path d="M8 5H14V23H8Z" fill="#20c040"/><path d="M15 3H23V21L15 23Z" fill="#2090d8"/><path d="M3 10H6M3 14H6M10 10H13M10 14H13M17 8H21M17 12H21" stroke="#fff"/></symbol>
<symbol id="t5" viewBox="0 0 24 24"><path d="M8 1Q22 2 24 16" fill="none" stroke="#4080d0" stroke-width="2.6"/><path d="M8 7Q17 8 18 16" fill="none" stroke="#4080d0" stroke-width="2.6"/><circle cx="9" cy="15" r="8" fill="#1c6cd0" stroke="#104090"/></symbol>
<symbol id="t6" viewBox="0 0 24 24"><path d="M3 1H15L21 7V23H3Z" fill="#f4f8ff" stroke="#3050c0" stroke-width="1.2"/><circle cx="12" cy="14" r="6" fill="#208060"/><circle cx="12" cy="14" r="6" fill="none" stroke="#3070b0" stroke-width="2"/></symbol>
<symbol id="t7" viewBox="0 0 24 24"><circle cx="12" cy="12" r="10.5" fill="#dfe8fc" stroke="#666" stroke-width="1.5"/><path d="M12 5V12H18" stroke="#111" stroke-width="1.5" fill="none"/></symbol>
<symbol id="t8" viewBox="0 0 24 24"><path d="M2 2H10V22H2Z" fill="url(#gRain)"/><path d="M12 9 21 22" stroke="#111" stroke-width="3"/><path d="M10 3 14 9M14 3 10 9" stroke="#f0f0f0"/></symbol>
<symbol id="t9" viewBox="0 0 24 24"><path d="M3 4H10L11 19H2Z" fill="#5090e8"/><path d="M10 4 23 7 13 14" fill="none" stroke="#3060d0"/><path d="M13 9 22 20" stroke="#111" stroke-width="3"/><path d="M1 22H14" stroke="#e0c020" stroke-width="1.5" stroke-dasharray="2 1"/></symbol>
<symbol id="t10" viewBox="0 0 24 24"><path d="M15 2 21 4 13 15 10 13Z" fill="#888"/><path d="M12 2H23V5H12Z" fill="#666"/><path d="M2 15 8 10 20 20 14 23Z" fill="#8090a0" stroke="#555"/><path d="M3 17H11V22H3Z" fill="#f08a20"/></symbol>
<symbol id="t11" viewBox="0 0 24 24"><path d="M1 6 9 3V23L1 20Z" fill="#f0f0f0" stroke="#666"/><path d="M9 4H24V20H9Z" fill="#fff" stroke="#666"/><path d="M10 5H23V15H10Z" fill="#e02020"/><path d="M14 5H19L20 13H13Z" fill="#7ab4f0"/><path d="M10 15H23V19H10Z" fill="#f0a060"/></symbol>
<symbol id="t12" viewBox="0 0 24 24"><path d="M2 12 8 10V21L2 23Z" fill="#30d060" stroke="#222"/><path d="M9 17H16V9" fill="none" stroke="#222" stroke-dasharray="2 1"/><path d="M9 17 13 15V19Z" fill="#222"/><circle cx="18" cy="6" r="5.5" fill="#50b030"/></symbol>
<symbol id="t13" viewBox="0 0 24 24"><path d="M1 6 9 3V23L1 20Z" fill="#f0f0f0" stroke="#666"/><path d="M9 4H24V21H9Z" fill="#fff" stroke="#666"/><circle cx="12" cy="8" r="2" fill="#2060e0"/><circle cx="12" cy="13" r="2" fill="#20a040"/><circle cx="12" cy="18" r="2" fill="#e02020"/><path d="M16 8H22M16 13H22M16 18H22" stroke="#222"/></symbol>
<symbol id="gear" viewBox="0 0 24 24"><circle cx="12" cy="12" r="6" fill="none" stroke="#222" stroke-width="3"/><path d="M12 2V6M12 18V22M2 12H6M18 12H22M5 5 8 8M16 16 19 19M19 5 16 8M8 16 5 19" stroke="#222" stroke-width="2.4"/></symbol>
<symbol id="ftc" viewBox="0 0 24 24"><circle cx="8" cy="7" r="5" fill="none" stroke="#d07070"/><path d="M8 0V14M1 7H15" stroke="#d07070"/><ellipse cx="15" cy="12" rx="4" ry="7" fill="none" stroke="#a89878" stroke-width="2.4"/><ellipse cx="20" cy="13" rx="3" ry="6" fill="none" stroke="#a89878" stroke-width="2.4"/><path d="M2 13 14 17V23H2Z" fill="#aaa" stroke="#777"/></symbol>
<symbol id="fa" viewBox="0 0 24 24"><path d="M1 8 8 2V6Q17 6 14 13L10 11Q12 9 8 9V13Z" fill="#88a8b0"/><path d="M9 13H23L18 19V23H14V19Z" fill="#908878"/></symbol>
<symbol id="fb" viewBox="0 0 24 24"><path d="M1 1H23V23H1Z" fill="none" stroke="#c01010" stroke-width="1.4"/><path d="M8 4V14M3 9H13" stroke="#111"/><circle cx="8" cy="9" r="3" fill="none" stroke="#c01010"/><path d="M10 12H22L18 17V22H14V17Z" fill="#f0b020" stroke="#b08010" stroke-width=".6"/></symbol>
<symbol id="fc" viewBox="0 0 24 24"><path d="M3 8Q7 1 14 5L16 3V10H10L12 8Q8 5 6 9Z" fill="#998"/><circle cx="14" cy="15" r="5" fill="none" stroke="#a06868"/><path d="M14 8V22M7 15H21" stroke="#a06868"/></symbol>
<symbol id="fd" viewBox="0 0 24 24"><path d="M1 3H8L14 7 12 11 4 8Z" fill="#888"/><path d="M14 5 20 7 18 11Z" fill="#999"/><path d="M17 12V22M13 16H23V22H13Z" fill="#bbb" stroke="#999"/></symbol>
<symbol id="fe" viewBox="0 0 24 24"><path d="M3 3H21V21H3Z" fill="none" stroke="#111" stroke-dasharray="2 1.5"/><circle cx="3" cy="3" r="2.2" fill="#e01010"/><circle cx="21" cy="21" r="2.2" fill="#e01010"/></symbol>
<symbol id="ff" viewBox="0 0 24 24"><path d="M2 10 6 6 18 3 23 6V16L8 22 3 20Z" fill="#e8ecfa" stroke="#5060a0"/><path d="M4 10 16 6" stroke="#e01010" stroke-width="1.6"/><path d="M6 19Q4 13 8 12L20 9" fill="none" stroke="#5060a0"/></symbol>
<symbol id="fg" viewBox="0 0 24 24"><path d="M2 7 12 3 23 7V17L12 23 2 17Z" fill="#3c9cf0" stroke="#1878d8"/><path d="M8 2V12L21 18M8 12 22 6" stroke="#e04060" fill="none"/></symbol>
<symbol id="fh" viewBox="0 0 24 24"><path d="M1 2 7 6 1 10Z" fill="#20b040"/><path d="M1 14 7 18 1 22Z" fill="#d02020"/><g fill="#fff" stroke="#111" stroke-width=".8"><path d="M15 1 18 5H12ZM15 23 12 19H18ZM5 12 9 9V15ZM24 12 20 15V9Z"/></g><circle cx="15" cy="12" r="2.6" fill="#f0e020"/></symbol>
<symbol id="fi" viewBox="0 0 24 24"><path d="M2 22 20 4" stroke="#111"/><circle cx="19" cy="5" r="2.4" fill="#e01010"/></symbol>
<symbol id="fj" viewBox="0 0 24 24"><path d="M2 22 21 3" stroke="#111"/><circle cx="12" cy="12" r="2.4" fill="#e01010"/></symbol>
<symbol id="fk" viewBox="0 0 24 24"><path d="M1 3Q11 2 11 12T23 21" fill="none" stroke="#111" stroke-width="1.2"/><circle cx="11" cy="12" r="2.4" fill="#e01010"/></symbol>
<symbol id="fl" viewBox="0 0 24 24"><path d="M5 14 11 4 16 17 21 11" fill="none" stroke="#a040c8" stroke-width="1.3"/><g fill="#e01010"><circle cx="5" cy="14" r="2.3"/><circle cx="11" cy="4" r="2.3"/><circle cx="16" cy="19" r="2.3"/><circle cx="21" cy="11" r="2.3"/></g></symbol>
<symbol id="fm" viewBox="0 0 24 24"><path d="M1 17Q12 4 23 17M12 2V22" fill="none" stroke="#111" stroke-width="1.2"/><circle cx="12" cy="9" r="2.4" fill="#e01010"/></symbol>
<symbol id="fn" viewBox="0 0 24 24"><circle cx="12" cy="12" r="10" fill="none" stroke="#111" stroke-width="1.2"/><path d="M12 8V16M8 12H16" stroke="#e01010"/><circle cx="12" cy="12" r="1.6" fill="#e01010"/></symbol>
<symbol id="fo" viewBox="0 0 24 24"><circle cx="12" cy="12" r="10" fill="none" stroke="#111" stroke-width="1.2"/><g fill="#e01010"><circle cx="12" cy="2" r="2.4"/><circle cx="2" cy="12" r="2.4"/><circle cx="22" cy="12" r="2.4"/><circle cx="12" cy="22" r="2.4"/></g></symbol>
<symbol id="fp" viewBox="0 0 24 24"><path d="M12 1V23M1 12H23" stroke="#111" stroke-width="1.1"/><circle cx="12" cy="12" r="2.4" fill="#e01010"/></symbol>
<symbol id="fq" viewBox="0 0 24 24"><path d="M2 12Q4 4 14 4L23 2 18 8Q14 9 15 13L6 22Q1 18 2 12Z" fill="#cde4f8" stroke="#3a88c8"/><path d="M15 13 22 18 9 22Z" fill="#999"/></symbol>
<symbol id="fr" viewBox="0 0 24 24"><path d="M3 5 20 2 21 22 4 22Z" fill="#f4f4f4" stroke="#111" stroke-width="1.2"/><path d="M3 9 21 7M3 13 21 12M3 18 21 17M8 3V22M14 3V22" stroke="#111"/></symbol>
<symbol id="fs" viewBox="0 0 24 24"><path d="M1 10 10 6 16 8V16L7 20 1 16Z" fill="#f0d888" stroke="#a08838"/><path d="M1 10 7 13 16 9M7 13V20" stroke="#a08838" fill="none"/><path d="M13 2H22V11H13Z" fill="#f8e8a0" stroke="#b09030"/></symbol>
<symbol id="fu" viewBox="0 0 24 24"><path d="M2 4H22V20H2Z" fill="#b0b8b8" stroke="#7a8a8a"/><path d="M2 4H22V8H2Z" fill="#8a9a9a"/></symbol>
<symbol id="fv" viewBox="0 0 24 24"><path d="M2 2H7V4H4V7H2ZM22 2V7H20V4H17V2ZM2 22V17H4V20H7V22ZM22 22H17V20H20V17H22Z" fill="#666"/><path d="M6 6H18V18H6Z" fill="#3078d8" stroke="#1c3a70"/><path d="M6 6H18V9H6Z" fill="#e8f0ff"/></symbol>
</svg>

<header class="title">
  <svg class="tlogo"><use href="#nx"/></svg>
  <span class="ttext">NX 10.0.3.5 - 建模 - [_model2.prt （修改的） ]</span>
  <span class="siemens">SIEMENS</span>
  <span class="wbtn">_</span><span class="wbtn">❐</span><span class="wbtn wclose">✕</span>
</header>

<nav class="menu">
  <span class="grip gm"></span>
  <svg class="mlogo"><use href="#cb"/></svg>
  <span class="mi">文件<span class="k">(<u>F</u>)</span></span>
  <span class="mi">编辑<span class="k">(<u>E</u>)</span></span>
  <span class="mi">视图<span class="k">(<u>V</u>)</span></span>
  <span class="mi">插入<span class="k">(<u>S</u>)</span></span>
  <span class="mi">格式<span class="k">(<u>R</u>)</span></span>
  <span class="mi">工具<span class="k">(<u>T</u>)</span></span>
  <span class="mi">装配<span class="k">(<u>A</u>)</span></span>
  <span class="mi">信息<span class="k">(<u>I</u>)</span></span>
  <span class="mi mw">分析<span class="k">(<u>L</u>)</span></span>
  <span class="mi">首选项<span class="k">(<u>P</u>)</span></span>
  <span class="mi">窗口<span class="k">(<u>O</u>)</span></span>
  <span class="mi gc">GC工具箱</span>
  <span class="mi">帮助<span class="k">(<u>H</u>)</span></span>
  <span class="mdi"><span class="mb">_</span><span class="mb">❐</span><span class="mb">✕</span></span>
</nav>

<section class="row">
  <span class="grip"></span>
  <svg class="n"><use href="#nx"/></svg><span class="qs">启动</span><i class="a"></i>
  <svg class="i"><use href="#doc"/></svg><svg class="i"><use href="#fold"/></svg><svg class="i"><use href="#save"/></svg><svg class="i"><use href="#print"/></svg>
  <b class="sep sw"></b>
  <svg class="i"><use href="#undo"/></svg><i class="a"></i><svg class="i"><use href="#redo"/></svg>
  <b class="sep"></b>
  <svg class="i"><use href="#arcx"/></svg><i class="a"></i><span class="more">»<i class="a t"></i></span>
  <b class="tbend tbz"></b>
  <span class="grip g6"></span>
  <svg class="i"><use href="#fit"/></svg><i class="a t"></i><svg class="i"><use href="#fit"/></svg>
  <svg class="n"><use href="#wcs"/><text x="11" y="7" class="st">Z</text><text x="19" y="15" class="st">Y</text><text x="17" y="24" class="st">X</text></svg>
  <span class="rt">重新生成工作视图</span>
  <svg class="i"><use href="#prism"/></svg><i class="a t"></i><svg class="i"><use href="#cbU"/></svg><i class="a t"></i>
  <svg class="i"><use href="#cbU"/></svg><svg class="i"><use href="#cg"/></svg><svg class="i"><use href="#cw1"/></svg><svg class="i"><use href="#cw1"/></svg><svg class="i"><use href="#cw2"/></svg><svg class="i"><use href="#paper"/></svg><svg class="i"><use href="#grid"/></svg><i class="a"></i>
  <b class="sep"></b>
  <svg class="i"><use href="#pla"/></svg><i class="a"></i><svg class="i"><use href="#pla"/></svg><svg class="i"><use href="#plb"/></svg><i class="a t e"></i>
  <b class="tbend tby"></b>
  <span class="grip g6"></span>
  <span class="lcombo"><span class="lval">1</span><span class="cbtn"></span></span>
  <svg class="i ml4"><use href="#stack"/></svg><svg class="i"><use href="#stack"/></svg><i class="a t"></i><svg class="i"><use href="#csO"/></svg><i class="a t"></i>
  <svg class="i"><use href="#node"/></svg><svg class="i"><use href="#ax0"/></svg><svg class="i"><use href="#csO"/></svg>
  <svg class="i"><use href="#ax"/><text x="5" y="24" class="st sm">(0,0,0)</text></svg>
  <svg class="i"><use href="#axL"/></svg><svg class="i"><use href="#axS"/></svg>
  <b class="sep sx"></b><svg class="i"><use href="#pal"/></svg><b class="sep sx"></b><svg class="i"><use href="#dg"/></svg><svg class="i"><use href="#dh"/></svg><b class="sep sx"></b>
  <svg class="i"><use href="#meas"/></svg><i class="a t"></i><svg class="i"><use href="#rule"/></svg><i class="a e"></i>
</section>

<section class="row">
  <span class="grip"></span>
  <svg class="n"><use href="#pln"/></svg><i class="a"></i><svg class="i"><use href="#ext"/></svg><i class="a"></i>
  <svg class="i"><use href="#ext"/></svg><svg class="i"><use href="#rev"/></svg><svg class="i"><use href="#ch"/></svg><svg class="i"><use href="#ch2"/></svg><svg class="i"><use href="#cr"/></svg><svg class="i"><use href="#cq"/></svg><svg class="i"><use href="#plate"/></svg><svg class="i"><use href="#slot"/></svg><svg class="i"><use href="#groove"/></svg><svg class="i"><use href="#tray"/></svg><svg class="i"><use href="#cg"/></svg><svg class="i"><use href="#cyl"/></svg><svg class="i"><use href="#cone"/></svg><svg class="i"><use href="#sph"/></svg>
  <svg class="i"><use href="#nx5"/><text x="9" y="23" class="st">NX5</text></svg>
  <svg class="i"><use href="#spring"/></svg>
  <b class="sep s3"></b>
  <svg class="i"><use href="#peg"/></svg><i class="a"></i><svg class="i"><use href="#rib"/></svg><svg class="i"><use href="#peg"/></svg><svg class="i"><use href="#pegs"/></svg><svg class="i"><use href="#split"/></svg><svg class="i"><use href="#teal"/></svg><i class="a t"></i>
  <svg class="i"><use href="#cut"/></svg><svg class="i"><use href="#twin"/></svg><svg class="i"><use href="#scb"/></svg><i class="a t"></i><svg class="i"><use href="#scb"/></svg><svg class="i"><use href="#blade"/></svg><svg class="i"><use href="#slice"/></svg><svg class="i"><use href="#frame"/></svg><i class="a t"></i>
  <svg class="i"><use href="#frame"/></svg><svg class="i"><use href="#band2"/></svg><svg class="i"><use href="#bend"/></svg><svg class="i"><use href="#cdot"/></svg>
  <b class="sep"></b>
  <svg class="i"><use href="#rnd"/></svg><i class="a"></i><svg class="i"><use href="#rnd"/></svg><svg class="i"><use href="#fil"/></svg><svg class="i"><use href="#chm"/></svg><svg class="i"><use href="#pyr"/></svg><i class="a t e"></i>
  <b class="tbend tb2"></b>
</section>

<section class="row">
  <span class="grip"></span>
  <svg class="n"><use href="#wr"/></svg><svg class="i ml2"><use href="#trm"/></svg><svg class="i"><use href="#crs"/></svg><svg class="i"><use href="#cfx"/></svg><svg class="i"><use href="#cf2"/></svg><i class="a t e"></i>
  <b class="tbend tb3"></b>
  <span class="grip g8"></span>
  <svg class="i"><use href="#pmv"/></svg><i class="a t"></i><svg class="i"><use href="#pmv"/></svg><svg class="i"><use href="#pup"/></svg><svg class="i"><use href="#pcp"/></svg><svg class="i"><use href="#cyt"/></svg><svg class="i"><use href="#psw"/></svg><svg class="i"><use href="#ptr"/></svg><i class="a t"></i>
  <svg class="i"><use href="#px"/></svg><svg class="i"><use href="#pd"/></svg><i class="a t"></i><svg class="i"><use href="#psp"/></svg><i class="a t"></i><svg class="i"><use href="#pdm"/></svg><i class="a t"></i><svg class="i"><use href="#gho"/></svg><i class="a t"></i><svg class="i"><use href="#pbx"/></svg><svg class="i"><use href="#ptg"/></svg><svg class="i"><use href="#pwd"/></svg><i class="a"></i><svg class="i"><use href="#pmw"/></svg><i class="a t"></i><i class="a t e"></i>
  <b class="tbend tb4"></b>
  <span class="grip g8"></span>
  <svg class="i"><use href="#pat"/></svg><i class="a"></i><svg class="i"><use href="#pt2"/></svg><svg class="i"><use href="#shU"/></svg><i class="a t"></i><svg class="i"><use href="#shU"/></svg><svg class="i"><use href="#shg"/></svg><svg class="i"><use href="#shn"/></svg><svg class="i"><use href="#shc"/></svg><svg class="i"><use href="#wrp"/></svg><i class="a t"></i><svg class="i"><use href="#wrp"/></svg><svg class="i"><use href="#wr2"/></svg><svg class="i"><use href="#cpn"/></svg><svg class="i"><use href="#swp"/></svg><svg class="i"><use href="#drp"/></svg><svg class="i"><use href="#brk"/></svg><i class="a t e"></i>
  <b class="tbend"></b>
</section>

<main class="main">
  <aside class="tabs">
    <svg class="gear"><use href="#gear"/></svg>
    <div class="tab t0"><svg><use href="#t1"/></svg></div>
    <div class="tab t-1"><svg><use href="#t2"/></svg></div>
    <div class="tab on"><svg><use href="#t3"/></svg></div>
    <div class="tab t-0"><svg><use href="#t4"/></svg></div>
    <div class="tab t-14"><svg><use href="#t5"/><text x="9" y="20" class="ti">i</text></svg></div>
    <div class="tab t-13"><svg><use href="#t6"/></svg></div>
    <div class="tab t-14"><svg><use href="#t7"/></svg></div>
    <div class="tab t-3"><svg><use href="#t8"/></svg></div>
    <div class="tab"><svg><use href="#t9"/></svg></div>
    <div class="tab"><svg><use href="#t10"/></svg></div>
    <div class="tab"><svg><use href="#t11"/></svg></div>
    <div class="tab"><svg><use href="#t12"/></svg></div>
    <div class="tab"><svg><use href="#t13"/></svg></div>
  </aside>

  <section class="nav">
    <div class="navh"><span>部件导航器</span><span class="maxb"></span></div>
    <div class="tbl">
      <div class="th"><span>名称</span><i class="sorta"></i></div>
      <div class="rows">
        <svg class="conn" width="120" height="180"><path d="M9 10H18M9 10V88M30 98V170M30 108H42M30 128H42M30 148H42M30 168H42" fill="none" stroke="#777" stroke-dasharray="1 1"/></svg>
        <div class="tr l1"><svg class="ti2"><use href="#t7"/></svg><span>历史记录模式</span></div>
        <div class="tr"><i class="ex">+</i><svg class="ti2"><use href="#tw"/></svg><span>模型视图</span></div>
        <div class="tr"><i class="ex">+</i><span class="chk">✔</span><svg class="ti2"><use href="#tc"/></svg><span>摄像机</span></div>
        <div class="tr"><i class="ex">+</i><svg class="ti2"><use href="#fldq"/></svg><span>用户表达式</span></div>
        <div class="tr"><i class="ex">−</i><svg class="ti2"><use href="#fld2"/></svg><span>模型历史记录</span></div>
        <div class="tr l2 dim"><i class="cb">✔</i><svg class="ti2"><use href="#tx"/></svg><span>基准坐标系 （0）</span></div>
        <div class="tr l2"><i class="cb">✔</i><svg class="ti2"><use href="#cyl"/></svg><span>圆柱 （1）</span></div>
        <div class="tr l2"><i class="cb">✔</i><svg class="ti2"><use href="#ts"/></svg><span class="clip">草图 （2） <span class="mono">"SKETCH_000"</span></span></div>
        <div class="tr l2 strong"><i class="cb">✔</i><svg class="ti2"><use href="#tp"/></svg><span>投影曲线 （3）</span></div>
      </div>
      <div class="hs"><i class="sb">◀</i><i class="thumb"></i><i class="track"></i><i class="sb">▶</i></div>
    </div>
    <div class="split"><i></i></div>
    <div class="pn"><span>相依性</span><i class="chev"></i></div>
    <div class="pn"><span>细节</span><i class="chev"></i></div>
    <div class="pn"><span>预览</span><i class="chev"></i></div>
  </section>

  <section class="view">
    <svg class="scene" viewBox="258 154 1296 639" width="1296" height="639">
      <path d="M544 602 1554 374" stroke="#3a4ce8" stroke-width="2.4"/>
      <path d="M366 355V620A88 29 0 0 0 542 620V355Z" fill="url(#gCyl)"/>
      <path d="M366 620A88 29 0 0 0 542 620" fill="none" stroke="#3a3f42" stroke-width="2"/>
      <path d="M366 362a88 28 0 0 0 176 0m-176 7.6a88 28 0 0 0 176 0m-176 7.6a88 28 0 0 0 176 0m-176 7.6a88 28 0 0 0 176 0m-176 7.6a88 28 0 0 0 176 0m-176 7.6a88 28 0 0 0 176 0m-176 7.6a88 28 0 0 0 176 0m-176 7.6a88 28 0 0 0 176 0m-176 7.6a88 28 0 0 0 176 0m-176 7.6a88 28 0 0 0 176 0m-176 7.6a88 28 0 0 0 176 0m-176 7.6a88 28 0 0 0 176 0m-176 7.6a88 28 0 0 0 176 0m-176 7.6a88 28 0 0 0 176 0m-176 7.6a88 28 0 0 0 176 0m-176 7.6a88 28 0 0 0 176 0m-176 7.6a88 28 0 0 0 176 0m-176 7.6a88 28 0 0 0 176 0m-176 7.6a88 28 0 0 0 176 0m-176 7.6a88 28 0 0 0 176 0m-176 7.6a88 28 0 0 0 176 0m-176 7.6a88 28 0 0 0 176 0m-176 7.6a88 28 0 0 0 176 0m-176 7.6a88 28 0 0 0 176 0m-176 7.6a88 28 0 0 0 176 0m-176 7.6a88 28 0 0 0 176 0m-176 7.6a88 28 0 0 0 176 0m-176 7.6a88 28 0 0 0 176 0m-176 7.6a88 28 0 0 0 176 0m-176 7.6a88 28 0 0 0 176 0m-176 7.6a88 28 0 0 0 176 0m-176 7.6a88 28 0 0 0 176 0m-176 7.6a88 28 0 0 0 176 0m-176 7.6a88 28 0 0 0 176 0" fill="none" stroke="#3e68d6" stroke-width="2"/>
      <ellipse cx="454" cy="355" rx="88" ry="28" fill="#c2d4da" stroke="#3a3f42" stroke-width="1.6"/>
      <path d="M484 295 489 365" stroke="#f0a050"/>
      <path d="M490 365 500 510" stroke="#d8d8d8" stroke-width="1.2"/>
      <circle cx="501" cy="513" r="4.5" fill="none" stroke="#f0a050" stroke-width="1.3"/>
      <path d="M435 317 432 297 429 273 433 255 442 243 460 233 483 230 490 225 507 222 550 223 570 227 587 233 598 245 607 267 611 287 611 317M435 317H617" fill="none" stroke="#14dcdc" stroke-width="6.5" stroke-linecap="round" stroke-linejoin="round"/>
      <path d="M673 497 678 503 680 523 677 530 682 533 686 552 695 570 704 590 718 597 732 606 746 607 768 616 821 617 850 613 879 605 889 587 895 570 893 547 882 538 868 518 850 502 825 489 782 487 750 493 729 497 704 508 688 518 680 523" fill="none" stroke="#14dcdc" stroke-width="6.5" stroke-linecap="round" stroke-linejoin="round"/>
      <path d="M322 727 342 718V740L322 749 310 740V716L330 712 342 718M310 716 322 727V749" fill="#a0a0a0" fill-opacity=".6" stroke="#b4b4b4"/>
      <path d="M311 736V708" stroke="#1030d0" stroke-width="2.5"/><path d="M311 700 307 710H315Z" fill="#1030d0"/>
      <path d="M311 736 330 745" stroke="#d02020" stroke-width="2.5"/>
      <path d="M311 736 340 729" stroke="#50a050" stroke-width="1.5"/>
      <circle cx="311" cy="736" r="4" fill="#eee"/>
      <text x="306" y="702" class="axl ax-z">Z</text><text x="342" y="733" class="axl ax-y">Y</text><text x="329" y="752" class="axl ax-x">X</text>
    </svg>
    <p class="note n1">截面恒定　用投影曲线&nbsp;&nbsp;等弧长投影做的螺旋线</p>
    <p class="note n2">误差很小</p>
    <div class="tip tp1">12566.3757 mm</div>
    <div class="tip tp2">12566.3706 mm</div>
  </section>

  <aside class="rbar">
    <span class="rgrip"></span>
    <div class="ri"><svg><use href="#lnd"/></svg><i class="a rar"></i></div>
    <div class="ri"><svg><use href="#lnd"/></svg></div>
    <div class="ri"><svg><use href="#arcd"/></svg></div>
    <div class="ri"><svg><use href="#chn"/></svg></div>
    <div class="ri"><svg><use href="#rct"/></svg></div>
    <div class="ri"><svg><use href="#srf"/></svg></div>
    <div class="ri"><svg><use href="#pol"/></svg></div>
    <div class="ri"><span class="bigA">A</span></div>
    <div class="ri"><svg><use href="#hrt"/></svg></div>
    <div class="ri"><svg><use href="#r1"/></svg></div>
    <div class="ri"><svg><use href="#r2"/></svg></div>
    <div class="ri"><svg><use href="#r3"/></svg></div>
    <div class="ri"><svg><use href="#r4"/></svg></div>
    <div class="ri"><svg><use href="#r5"/></svg></div>
    <div class="ri"><svg><use href="#r6"/></svg></div>
    <div class="ri"><svg><use href="#r7"/></svg></div>
    <div class="ri"><svg><use href="#r8"/></svg></div>
    <div class="ri"><svg><use href="#r9"/></svg></div>
    <div class="ri"><svg><use href="#r10"/></svg></div>
  </aside>
</main>

<section class="fbar">
  <span class="combo c1"><span>无选择过滤器</span><i class="cbtn"></i></span>
  <span class="combo c2"><span>仅在工作部件内</span><i class="cbtn"></i></span>
  <svg class="n ml6"><use href="#ftc"/></svg>
  <b class="sep s3"></b>
  <svg class="n ml6"><use href="#fa"/></svg>
  <svg class="n ml6"><use href="#fb"/></svg><i class="a"></i>
  <svg class="n ml2"><use href="#fc"/></svg><svg class="n ml6"><use href="#fd"/></svg>
  <b class="sep s4"></b>
  <svg class="n"><use href="#fe"/></svg><i class="a"></i>
  <b class="sep s4"></b>
  <svg class="n"><use href="#ff"/></svg><svg class="n ml4"><use href="#fg"/></svg>
  <b class="sep s4"></b>
  <svg class="bt"><use href="#fh"/></svg><svg class="bt"><use href="#fi"/></svg><svg class="bt"><use href="#fj"/></svg><svg class="n ml2"><use href="#fk"/></svg>
  <svg class="bt ml2"><use href="#fl"/></svg><svg class="bt pl"><use href="#fm"/></svg><svg class="bt"><use href="#fn"/></svg><svg class="bt pl"><use href="#fo"/></svg><svg class="bt"><use href="#fp"/></svg><svg class="bt"><use href="#fi"/></svg><svg class="bt pl"><use href="#fq"/></svg>
  <svg class="n ml8"><use href="#fr"/></svg>
  <b class="sep s4"></b>
  <svg class="n"><use href="#fs"/></svg>
  <span class="upd">更新以获取外部更改</span>
  <i class="a fend"></i>
</section>

<section class="status">
  <span class="stxt">选择对象并使用 <span class="mono">MB3</span>，或者双击某一对象</span>
  <b class="ssep s1"></b><b class="ssep s2"></b><b class="ssep s5"></b>
  <svg class="si"><use href="#fu"/></svg><svg class="si"><use href="#fv"/></svg>
  <b class="ssep s6"></b>
</section>

<footer class="task">
  <span class="tk t1k"></span><span class="tk t2k"></span><span class="tk t3k"></span><span class="tk t4k"></span>
</footer>

<div class="promo"><span class="promo-t">双<br>11</span></div>
<div class="slider"></div>
<div class="wm">
  <svg class="wm-hex" viewBox="0 0 72 82" width="72" height="82">
    <path d="M36 0 71 20V61L36 82 1 61V20Z" fill="#43ade4" fill-opacity=".72"/>
    <path d="M36 22 56 33V53L36 64 17 53V33Z" fill="#c8d4dc" fill-opacity=".65"/>
    <path d="M36 24 53 34 36 44 19 34Z" fill="#b4dcf2" fill-opacity=".9"/>
    <path d="M19 34 36 44V62L19 52Z" fill="#94ccec" fill-opacity=".9"/>
    <path d="M53 34 36 44V62L53 52Z" fill="#60b4e4" fill-opacity=".9"/>
    <path d="M1 20Q30 0 71 61M71 20Q40 40 36 82" fill="none" stroke="#fff" stroke-opacity=".3"/>
  </svg>
  <div class="wm-text"><span class="wm-big">3D世界网</span><span class="wm-url">WWW.3DSJW.COM</span></div>
</div>
</body>
</html>
```

FILE: styles.css
```css
* { box-sizing: border-box; }
html, body { margin: 0; padding: 0; }
body {
  width: 1599px; height: 859px; overflow: hidden; position: relative;
  display: flex; flex-direction: column;
  font-family: "Noto Sans CJK SC", "Liberation Sans", sans-serif;
  color: #1c1c1c; background: #d4d0c8;
}
.defs { position: absolute; width: 0; height: 0; }
.st { font: bold 7px "Liberation Sans", sans-serif; fill: #222; }
.sm { font-size: 5.5px; }
.ti { font: bold 13px "Liberation Serif", serif; fill: #fff; text-anchor: middle; }
.bigA { font: bold 24px/26px "Liberation Serif", serif; color: #111; width: 24px; text-align: center; }
.mono { font-family: "Liberation Mono", monospace; }

.title {
  height: 26px; flex: none; display: flex; align-items: center;
  background: linear-gradient(#6a6a6a 0, #555 5px, #1b1b1b 6px, #1b1b1b 25px, #000 25px);
  color: #fff; padding-top: 5px;
}
.tlogo { width: 22px; height: 22px; margin: -2px 0 0 3px; flex: none; }
.ttext { font: bold 15px "Liberation Mono", "Noto Sans CJK SC", monospace; margin-left: 2px; white-space: pre; letter-spacing: .15px; }
.siemens { font: bold 15.5px "Liberation Sans", sans-serif; margin-left: auto; margin-right: 24px; letter-spacing: .1px; }
.wbtn {
  width: 21px; height: 18px; margin: -3px 2px 0 0; flex: none; border: 1px solid #777; border-radius: 3px;
  background: linear-gradient(#5a5a5a, #333); display: flex; align-items: center; justify-content: center;
  font: bold 12px "DejaVu Sans", sans-serif; color: #fff;
}
.wclose { background: linear-gradient(#ec7a55, #d04a28); }

.menu {
  height: 26px; flex: none; display: flex; align-items: center;
  background: linear-gradient(#e8e8e8, #dcdcdc); border-bottom: 1px solid #b0b0b0;
  font-size: 15px; padding-bottom: 4px;
}
.gm { width: 9px; height: 18px; }
.mlogo { width: 20px; height: 20px; margin: 0 4px 0 0; flex: none; }
.mi { margin-right: 15.6px; white-space: nowrap; line-height: 20px; }
.mw { margin-right: 31px; }
.gc { margin-right: 11px; }
.k { font: 12px "Liberation Mono", monospace; }
.mdi { margin-left: auto; display: flex; gap: 3px; margin-right: 4px; }
.mb {
  width: 17px; height: 17px; border: 1px solid #909090; border-radius: 3px;
  background: linear-gradient(#f4f4f4, #d4d4d4); display: flex; align-items: center; justify-content: center;
  font: bold 11px "DejaVu Sans", sans-serif; color: #666;
}

.row {
  height: 34px; flex: none; display: flex; align-items: center; overflow: hidden;
  background: linear-gradient(#dedede, #cfcfcf); border-bottom: 1px solid #b4b4b4; border-top: 1px solid #efefef;
}
.i { width: 31.2px; height: 24px; flex: none; }
.n { width: 26px; height: 24px; flex: none; }
.ml2 { margin-left: 2px; } .ml4 { margin-left: 4px; } .ml6 { margin-left: 6px; } .ml8 { margin-left: 8px; } .ml10 { margin-left: 10px; }
.grip {
  width: 10px; height: 26px; flex: none;
  background: linear-gradient(#9a9a9a 50%, transparent 50%) center / 2px 4px repeat-y;
}
.g6 { width: 6px; } .g8 { width: 8px; }
.a { width: 11px; height: 24px; margin-left: 2px; flex: none; display: flex; align-items: center; justify-content: center; }
.a::after { content: ""; border: 4px solid transparent; border-top: 4px solid #111; border-bottom: 0; }
.a.t { width: 10px; margin-left: 1px; }
.a.e { margin-top: 14px; }
.qs { width: 28px; margin-left: 3px; font-size: 14px; white-space: nowrap; line-height: 20px; }
.sep { width: 1px; height: 28px; flex: none; margin: 0 2px; background: #eee; box-shadow: -1px 0 0 #b4b4b4; }
.sw { margin: 0 2px 0 4px; } .s3 { margin: 0 1px; } .s4 { margin: 0 3px 0 6px; } .sx { margin: 0 2.5px; }
.more { width: 12px; margin-left: 3px; height: 30px; flex: none; position: relative; font: bold 15px "DejaVu Sans", sans-serif; line-height: 12px; display: flex; flex-direction: column; align-items: center; }
.more .a { height: 14px; margin: 3px 0 0; }
.tbend { width: 1px; height: 100%; flex: none; margin: 0 1px 0 2px; background: #b4b4b4; box-shadow: 1px 0 0 #f0f0f0; }
.tb2, .tb3 { margin-left: 3px; }
.tbz { margin: 0; }
.tby { margin: 0 1px 0 1px; }
.tb4 { margin-left: 0; }
.rt { font-size: 15px; margin-left: 10px; margin-right: 3px; white-space: nowrap; flex: none; line-height: 20px; width: 120px; }
.qs, .rt { margin-bottom: 3px; }
.lcombo { width: 50px; height: 20px; margin-left: 5px; flex: none; display: flex; border: 1px solid #555; border-radius: 3px; background: #fff; overflow: hidden; }
.lval { flex: 1; font: 13px "Liberation Mono", monospace; line-height: 18px; padding-left: 2px; }
.cbtn {
  width: 19px; flex: none; display: flex; align-items: center; justify-content: center;
  background: linear-gradient(#a8cdf0, #3a80cc);
}
.cbtn::after { content: ""; border: 6px solid transparent; border-top: 7px solid #14243c; border-bottom: 0; }

.main { height: 639px; flex: none; display: flex; overflow: hidden; }
.tabs {
  width: 31px; flex: none; display: flex; flex-direction: column; align-items: flex-end;
  background: linear-gradient(90deg, #c0c0c0, #a4a4a4);
}
.gear { width: 18px; height: 18px; margin: 6px 7px 0 0; flex: none; }
.tab {
  width: 27px; height: 40px; margin-top: 2px; flex: none; display: flex; align-items: center; justify-content: center;
  background: #d8d8d8; border: 1px solid #8c8c8c; border-right: 0; border-radius: 4px 0 0 4px;
}
.tab svg { width: 24px; height: 24px; overflow: visible; }
.t0 { margin-top: 22px; }
.t-1 { margin-top: 1px; }
.t-0 { margin-top: 0; }
.t-3 { margin-top: 3px; }
.t-13 { margin-top: 13px; }
.t-14 { margin-top: 14px; }
.tab.on { width: 29px; height: 45px; background: #f0f0f0; margin-top: 0; }

.nav { width: 227px; flex: none; display: flex; flex-direction: column; padding: 0 11px 0 8px; background: #ececec; border-left: 1px solid #f8f8f8; }
.navh { height: 37px; flex: none; display: flex; align-items: center; justify-content: space-between; padding: 0 5px 0 5px; font-size: 14.5px; font-weight: 700; }
.navh > span:first-child { margin-bottom: 2px; }
.maxb { width: 15px; height: 14px; border: 1px solid #111; border-top-width: 3px; background: #f6f6f6; }
.tbl { height: 504px; flex: none; display: flex; flex-direction: column; border: 1px solid #808080; background: #fff; }
.th { height: 19px; flex: none; display: flex; align-items: center; gap: 16px; padding-left: 7px; font-size: 14.5px; line-height: 16px; background: linear-gradient(#f2f2f2, #d8d8d8); border-bottom: 1px solid #aaa; }
.sorta { border: 6px solid transparent; border-bottom: 6px solid #111; border-top: 0; }
.rows {
  flex: 1; position: relative; overflow: hidden;
  background: repeating-linear-gradient(#fff 0 19px, #ebebeb 19px 20px, #f7f7f7 20px 39px, #ebebeb 39px 40px);
}
.conn { position: absolute; left: 0; top: 0; }
.tr { height: 20px; display: flex; align-items: center; font-size: 14.5px; line-height: 18px; white-space: nowrap; padding-left: 5px; position: relative; color: #222; }
.tr > span { margin-bottom: 2px; }
.tr > .chk { margin-bottom: 0; }
.ex { width: 9px; height: 9px; flex: none; border: 1px solid #888; background: #f4f4f4; font: 9px/7px "Liberation Mono", monospace; text-align: center; margin-right: 3px; }
.ti2 { width: 18px; height: 18px; flex: none; margin-right: 3px; }
.tr.l1 { padding-left: 17px; }
.chk { color: #10c040; font: bold 15px "DejaVu Sans", sans-serif; width: 16px; flex: none; margin-left: 2px; }
.l2 { padding-left: 41px; }
.l2 .ti2 { margin-left: 2px; margin-right: 2px; }
.cb { width: 12px; height: 12px; flex: none; border: 1px solid #111; background: #fff; color: #10b040; font: bold 13px/10px "DejaVu Sans", sans-serif; text-align: center; }
.dim { color: #a8a8a8; }
.strong { font-weight: 700; }
.clip { width: 136px; overflow: hidden; }
.clip .mono { font-size: 12.5px; }
.hs { height: 20px; flex: none; display: flex; border-top: 1px solid #999; }
.sb { width: 20px; flex: none; background: #d4d0c8; border: 1px solid; border-color: #fff #555 #555 #fff; font: 10px/17px "DejaVu Sans", sans-serif; text-align: center; color: #111; }
.thumb { width: 60px; flex: none; background: #d4d0c8; border: 1px solid; border-color: #fff #555 #555 #fff; }
.track { flex: 1; background: repeating-conic-gradient(#d4d0c8 0 25%, #fff 0 50%) 0 0 / 2px 2px; }
.split { height: 14px; flex: none; display: flex; align-items: center; justify-content: center; background: linear-gradient(transparent 5px, #fff 5px, #fff 7px, transparent 7px); }
.split i { width: 36px; height: 6px; background: #d0d0d0; border: 1px solid #aaa; }
.pn {
  height: 25px; margin-bottom: 1px; flex: none; display: flex; align-items: center; justify-content: space-between;
  padding-left: 7px; font-size: 14.5px; line-height: 18px; color: #1a1a6e;
  background: linear-gradient(#f8f8f8 0, #f4f4f4 50%, #d4d6d8 60%, #dcdee0 100%); border-bottom: 1px solid #909090;
}
.pn > span { margin-bottom: 3px; }
.chev { width: 25px; height: 100%; flex: none; border-left: 2px solid #aaa; display: flex; align-items: center; justify-content: center; }
.chev::after { content: ""; width: 9px; height: 9px; margin-top: -5px; border: solid #707070; border-width: 0 3px 3px 0; transform: rotate(45deg); }

.view { width: 1296px; flex: none; background: #000; position: relative; overflow: hidden; }
.scene { display: block; }
.axl { font: 12px "Liberation Sans", sans-serif; }
.ax-z { fill: #1030d0; } .ax-y { fill: #30a030; } .ax-x { fill: #d02020; }
.note { position: absolute; margin: 0; color: #e02828; font-size: 32px; line-height: 42px; white-space: nowrap; font-weight: 300; letter-spacing: 1.04px; }
.n1 { left: 405px; top: 37px; }
.n2 { left: 406px; top: 79px; }
.tip {
  position: absolute; width: 112px; height: 26px; border: 4px solid #f2f2f2; background: #c8c8c8;
  font: 13px/18px "Liberation Mono", monospace; color: #3a68d8; text-align: center; white-space: nowrap;
  box-shadow: 1px 1px 0 #808080;
}
.tp1 { left: 226px; top: 128px; }
.tp2 { left: 459px; top: 385px; }

.rbar { width: 45px; flex: none; display: flex; flex-direction: column; background: linear-gradient(90deg, #e2e2e2, #d4d4d4); }
.rgrip { height: 7px; margin: 1px 4px 0; flex: none; background: linear-gradient(90deg, #aaa 50%, transparent 50%) 0 center / 4px 2px repeat-x; }
.ri { height: 30.9px; flex: none; display: flex; align-items: center; padding-left: 6px; }
.ri svg { width: 24px; height: 24px; flex: none; }
.rar { margin-left: 5px; width: 8px; }

.fbar { height: 33px; flex: none; display: flex; align-items: center; padding-left: 6px; background: linear-gradient(#c8c8c8, #dadada 30%, #d2d2d2); border-bottom: 1px solid #f0f0f0; overflow: hidden; }
.combo { height: 20px; flex: none; display: flex; justify-content: space-between; border: 1px solid #555; border-radius: 3px; background: #fff; font-size: 15px; line-height: 17px; overflow: hidden; }
.c1 { width: 146px; }
.c2 { width: 154px; margin-left: 9px; }
.bt { width: 30px; height: 30px; flex: none; margin-right: 1px; background: #fff; border: 1px solid #777; border-radius: 3px; padding: 2px; }
.bt.pl { background: none; border-color: transparent; }
.upd { font-size: 14.5px; line-height: 20px; margin-left: 7px; margin-bottom: 4px; white-space: nowrap; }
.fend { margin-left: auto; margin-right: 2px; margin-top: 12px; }

.status { height: 24px; flex: none; display: flex; align-items: center; background: #d8d8d8; border-bottom: 2px solid #9c9c9c; }
.stxt { font-size: 14.5px; line-height: 18px; font-weight: 700; margin-left: 4px; margin-bottom: 4px; width: 739px; flex: none; white-space: nowrap; }
.ssep { width: 1px; height: 100%; flex: none; background: #f4f4f4; }
.s2 { margin-left: 743px; } .s5 { margin-left: 19px; }
.si { width: 20px; height: 20px; flex: none; }
.s6 { margin-left: 26px; }

.task { height: 9px; flex: none; display: flex; background: #d4d0c8; overflow: hidden; }
.tk { height: 9px; flex: none; border: 1px solid; border-color: #fff #555 transparent #fff; background: #d4d0c8; }
.t1k { width: 58px; }
.t2k { width: 30px; margin-left: 107px; background: #c8d8f0; }
.t3k { width: 157px; margin-left: 15px; background: #fff; border-color: #555 #555 transparent #555; }
.t4k { width: 159px; margin-left: 4px; background: #e4e0d8; }

.promo { position: absolute; left: 1565px; top: 750px; width: 26px; height: 44px; background: linear-gradient(110deg, #f08020, #e81c1c 60%); clip-path: polygon(10% 0, 100% 8%, 100% 100%, 40% 100%); display: flex; justify-content: center; padding-left: 6px; }
.promo-t { color: #fff; font-size: 11px; font-weight: 700; line-height: 14px; text-align: center; padding-top: 6px; }
.slider { position: absolute; left: 1590px; top: 738px; width: 9px; height: 60px; background: repeating-linear-gradient(#1c2c38 0 3px, #2a4254 3px 4px); border-radius: 2px 0 0 2px; }
.wm { position: absolute; left: 1316px; top: 764px; display: flex; gap: 9px; }
.wm-hex { flex: none; }
.wm-text { display: flex; flex-direction: column; align-items: flex-start; padding-top: 6px; }
.wm-big { font: bold 42px/46px "Liberation Sans", "Noto Sans CJK SC", sans-serif; color: rgba(255,255,255,.34); white-space: nowrap; }
.wm-url { font: bold 12px/14px "Liberation Sans", sans-serif; letter-spacing: 4.7px; color: rgba(255,255,255,.45); margin-top: 5px; white-space: nowrap; }
```
